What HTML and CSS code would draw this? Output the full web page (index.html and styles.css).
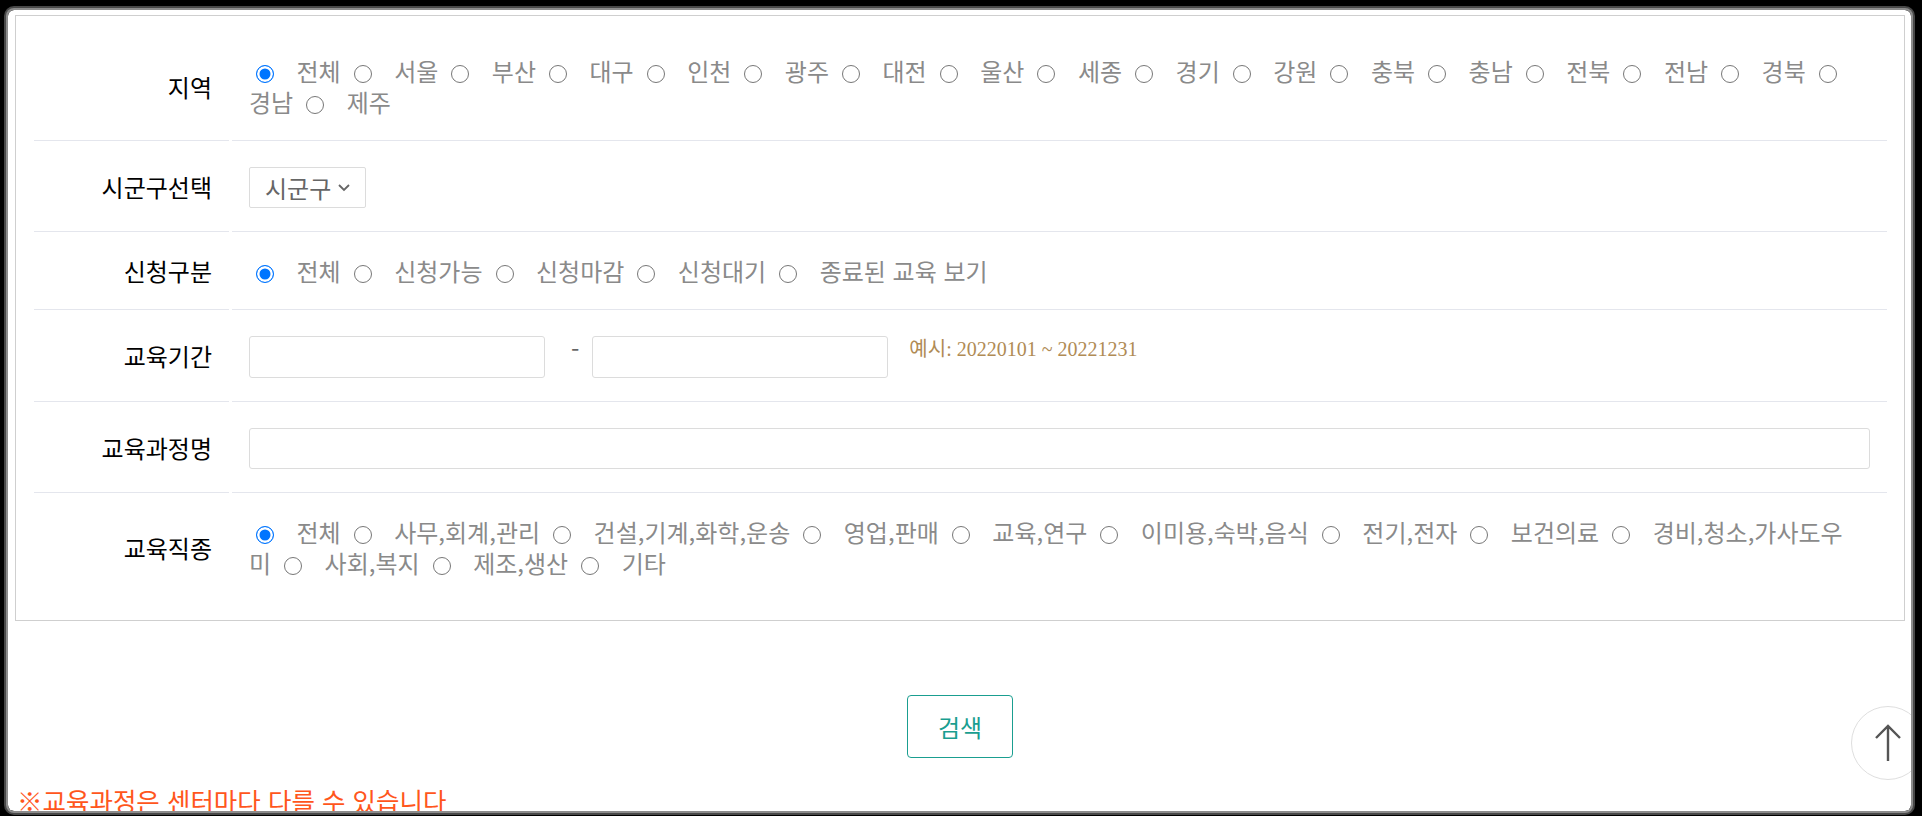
FILE: index.html
```html
<!DOCTYPE html>
<html lang="ko">
<head>
<meta charset="utf-8">
<title>교육과정 검색</title>
<link rel="stylesheet" href="styles.css">
</head>
<body>
<div class="page">
  <div class="card">
    <div class="form">
      <div class="th">지역</div>
      <div class="td radios"><input type="radio" name="area" checked><label>전체</label><input type="radio" name="area"><label>서울</label><input type="radio" name="area"><label>부산</label><input type="radio" name="area"><label>대구</label><input type="radio" name="area"><label>인천</label><input type="radio" name="area"><label>광주</label><input type="radio" name="area"><label>대전</label><input type="radio" name="area"><label>울산</label><input type="radio" name="area"><label>세종</label><input type="radio" name="area"><label>경기</label><input type="radio" name="area"><label>강원</label><input type="radio" name="area"><label>충북</label><input type="radio" name="area"><label>충남</label><input type="radio" name="area"><label>전북</label><input type="radio" name="area"><label>전남</label><input type="radio" name="area"><label>경북</label><input type="radio" name="area"><label>경남</label><input type="radio" name="area"><label>제주</label></div>

      <div class="th">시군구선택</div>
      <div class="td fields">
        <div class="sel-wrap">
          <select class="sel"><option>시군구</option></select>
          <svg class="chev" width="14" height="9" viewBox="0 0 14 9"><path d="M2 2 L7 7 L12 2" fill="none" stroke="#666" stroke-width="1.8"/></svg>
        </div>
      </div>

      <div class="th">신청구분</div>
      <div class="td radios"><input type="radio" name="apply" checked><label>전체</label><input type="radio" name="apply"><label>신청가능</label><input type="radio" name="apply"><label>신청마감</label><input type="radio" name="apply"><label>신청대기</label><input type="radio" name="apply"><label>종료된 교육 보기</label></div>

      <div class="th">교육기간</div>
      <div class="td fields top">
        <input class="inp date" type="text">
        <span class="dash">-</span>
        <input class="inp date" type="text">
        <span class="hint">예시: 20220101 ~ 20221231</span>
      </div>

      <div class="th">교육과정명</div>
      <div class="td fields">
        <input class="inp wide" type="text">
      </div>

      <div class="th last">교육직종</div>
      <div class="td radios narrow last"><input type="radio" name="job" checked><label>전체</label><input type="radio" name="job"><label>사무,회계,관리</label><input type="radio" name="job"><label>건설,기계,화학,운송</label><input type="radio" name="job"><label>영업,판매</label><input type="radio" name="job"><label>교육,연구</label><input type="radio" name="job"><label>이미용,숙박,음식</label><input type="radio" name="job"><label>전기,전자</label><input type="radio" name="job"><label>보건의료</label><input type="radio" name="job"><label>경비,청소,가사도우미</label><input type="radio" name="job"><label>사회,복지</label><input type="radio" name="job"><label>제조,생산</label><input type="radio" name="job"><label>기타</label></div>
    </div>
  </div>

  <div class="actions"><button class="btn-search" type="button">검색</button></div>
  <p class="notice">※교육과정은 센터마다 다를 수 있습니다</p>
</div>

<a class="to-top" href="#">
  <svg width="30" height="40" viewBox="0 0 30 40"><path d="M15 3 V38 M3 15 L15 3 L27 15" fill="none" stroke="#555" stroke-width="2.4"/></svg>
</a>
<div class="frame"></div>
</body>
</html>
```

FILE: styles.css
```css
* { box-sizing: border-box; }
html, body { margin: 0; padding: 0; background: #fff; }
body {
  width: 1922px;
  height: 816px;
  overflow: hidden;
  font-family: "Noto Sans CJK KR", "Noto Sans", sans-serif;
  color: #222;
}
.page { padding: 15px 17px 0 15px; }
.card {
  border: 1px solid #cfcfcf;
  padding: 16px 17px 19px 18px;
  background: #fff;
}
.form {
  display: grid;
  grid-template-columns: 195px 1fr;
  column-gap: 3px;
}
.th {
  display: flex;
  align-items: center;
  justify-content: flex-end;
  padding-right: 17px;
  border-bottom: 1px solid #e4e6ed;
  font-size: 24px;
  font-weight: 400;
  color: #000;
}
.td {
  padding: 23px 17px 23px;
  border-bottom: 1px solid #e4e6ed;
  font-size: 24px;
  line-height: 31px;
  color: #8a8a8a;
}
.td.fields { padding: 26px 17px 23px; }
.td.narrow { padding-right: 24px; }
.th.last, .td.last { border-bottom: none; }
.radios input {
  appearance: none;
  -webkit-appearance: none;
  width: 18px;
  height: 18px;
  margin: 0 22.5px 0 7px;
  border: 1.5px solid #777;
  border-radius: 50%;
  background: #fff;
  vertical-align: -2px;
}
.radios input:checked {
  border-color: #0075ff;
  background: #0075ff;
  box-shadow: inset 0 0 0 2.5px #fff;
}
.radios label { margin-right: 6px; }
.fields { display: flex; align-items: center; }
.fields.top { align-items: flex-start; }
.sel-wrap { position: relative; display: inline-flex; }
.sel {
  appearance: none;
  -webkit-appearance: none;
  width: 117px;
  height: 41px;
  border: 1px solid #dcdcdc;
  border-radius: 2px;
  background: #fff;
  padding: 0 0 0 15px;
  font-family: inherit;
  font-size: 24px;
  color: #666;
}
.chev { position: absolute; left: 88px; top: 16px; }
.inp {
  height: 42px;
  border: 1px solid #dcdcdc;
  border-radius: 3px;
  background: #fff;
  font-family: inherit;
  font-size: 18px;
}
.date { width: 296px; }
.wide { width: 100%; height: 41px; }
.dash { margin: 0 13px 0 26px; line-height: 26px; color: #666; }
.hint {
  margin-left: 21px;
  line-height: 26px;
  font-family: "Liberation Serif", "Noto Sans CJK KR", serif;
  font-size: 20px;
  color: #b08b55;
}
.actions { display: flex; justify-content: center; margin-top: 74px; }
.btn-search {
  width: 106px;
  height: 63px;
  border: 1px solid #1a9e90;
  border-radius: 4px;
  background: #fff;
  color: #1a9e90;
  font-family: inherit;
  font-size: 24px;
}
.notice {
  margin: 27px 0 0 2px;
  font-size: 25.5px;
  line-height: 30px;
  color: #ff561c;
}
.to-top {
  position: fixed;
  left: 1851px;
  top: 706px;
  width: 74px;
  height: 74px;
  border: 1px solid #dedede;
  border-radius: 50%;
  background: #fff;
  display: flex;
  align-items: center;
  justify-content: center;
}
.frame {
  position: fixed;
  top: 10px;
  left: 8px;
  right: 11px;
  bottom: 5px;
  border-radius: 6px;
  pointer-events: none;
  box-shadow: 0 0 0 2px rgba(170,170,170,0.7), 0 0 0 4px rgba(80,80,80,0.9), 0 0 0 60px #000;
}
```
